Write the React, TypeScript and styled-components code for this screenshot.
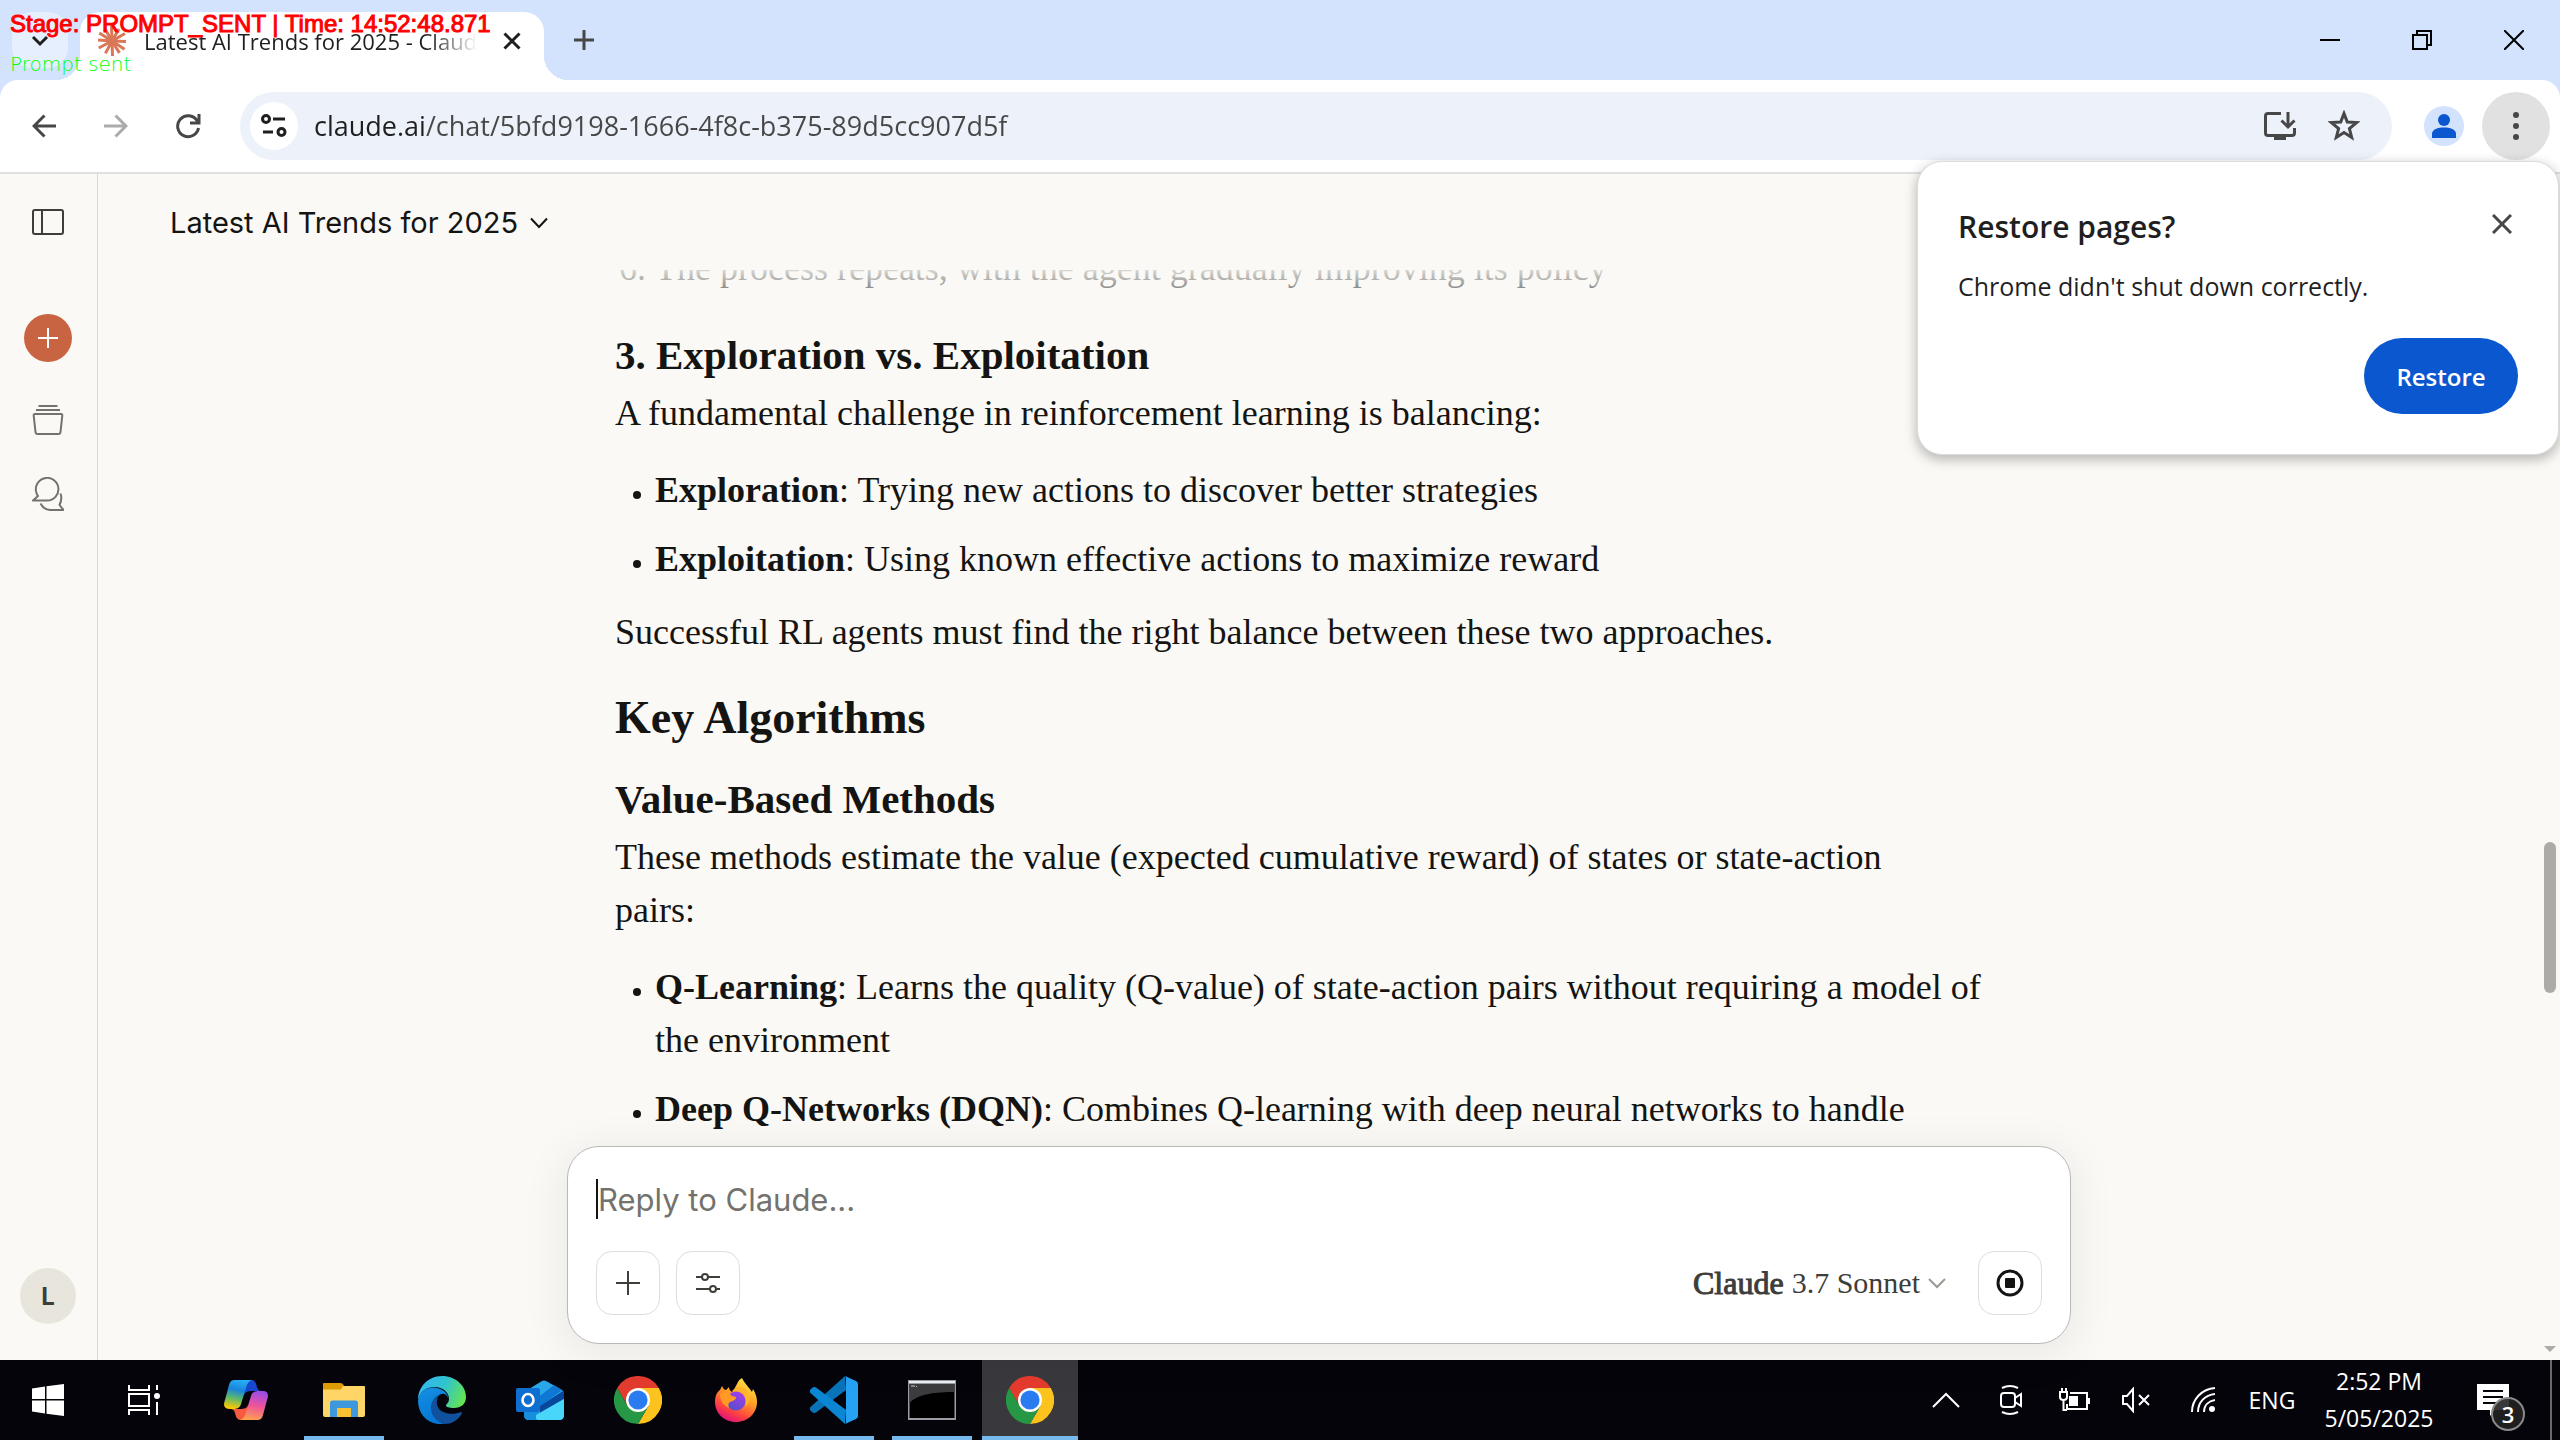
import React from 'react';
import styled, { createGlobalStyle } from 'styled-components';

const ui = `"Open Sans", "Noto Sans", sans-serif`;
const sans = `Inter, "Liberation Sans", sans-serif`;
const serif = `"Liberation Serif", serif`;

const GlobalStyle = createGlobalStyle`
  *, *::before, *::after { box-sizing: border-box; }
  html, body, #root { height: 100%; }
  body { margin: 0; overflow: hidden; background: #faf9f5; color: #141413; font-family: ${ui}; }
  button { border: 0; padding: 0; background: none; color: inherit; font: inherit; cursor: pointer; }
  svg { display: block; flex: none; }
  h1, h2, h3, p, ul, ol { margin: 0; }
`;

const Screen = styled.div`
  position: relative;
  display: grid;
  grid-template-rows: 80px 94px minmax(0, 1fr) 80px;
  height: 100vh;
`;

/* ---------- tab strip ---------- */

const TabStrip = styled.header`
  display: flex;
  align-items: stretch;
  padding-left: 12px;
  background: #d3e3fd;
`;

const TabSearch = styled.button`
  align-self: center;
  display: grid;
  place-items: center;
  width: 56px;
  height: 56px;
  margin-right: 12px;
  border-radius: 20px;
  background: #e6effd;
`;

const Tab = styled.div`
  position: relative;
  display: flex;
  align-items: center;
  gap: 16px;
  width: 464px;
  margin-top: 12px;
  padding: 0 20px 10px 16px;
  border-radius: 20px 20px 0 0;
  background: #fff;

  &::before,
  &::after {
    content: '';
    position: absolute;
    bottom: 0;
    width: 24px;
    height: 24px;
  }
  &::before {
    right: 100%;
    background: radial-gradient(circle at 0 0, transparent 24px, #fff 24px);
  }
  &::after {
    left: 100%;
    background: radial-gradient(circle at 100% 0, transparent 24px, #fff 24px);
  }
`;

const TabTitle = styled.span`
  flex: 1;
  overflow: hidden;
  white-space: nowrap;
  font-size: 22px;
  line-height: 32px;
  color: #1f1f1f;
  mask-image: linear-gradient(to right, #000 calc(100% - 56px), transparent 98%);
`;

const StripButton = styled.button`
  display: grid;
  place-items: center;
  width: 80px;
`;

const WindowControls = styled.div`
  display: flex;
  margin-left: auto;
`;

const WindowButton = styled.button`
  display: grid;
  place-items: center;
  width: 92px;
`;

/* ---------- toolbar ---------- */

const ToolbarWrap = styled.div`
  background: #d3e3fd;
`;

const Toolbar = styled.div`
  display: flex;
  align-items: center;
  height: 94px;
  padding: 0 10px 0 8px;
  border-bottom: 2px solid #e0e0e0;
  border-radius: 18px 18px 0 0;
  background: #fff;
`;

const NavButton = styled.button`
  display: grid;
  place-items: center;
  width: 72px;
  height: 68px;
`;

const Omnibox = styled.label`
  flex: 1;
  display: flex;
  align-items: center;
  height: 68px;
  margin: 0 32px 0 16px;
  padding: 0 16px 0 10px;
  border-radius: 34px;
  background: #ecf1fa;
`;

const SiteInfo = styled.button`
  display: grid;
  place-items: center;
  width: 48px;
  height: 48px;
  border-radius: 50%;
  background: #fff;
`;

const UrlInput = styled.input`
  flex: 1;
  min-width: 0;
  margin-left: 16px;
  padding: 0;
  border: 0;
  outline: 0;
  font-family: ${ui};
  font-size: 27px;
  line-height: 40px;
  color: #474747;
  background: linear-gradient(to right, #1f1f1f 110px, #474747 110px);
  background-clip: text;
  -webkit-text-fill-color: transparent;
`;

const OmniAction = styled.button`
  display: grid;
  place-items: center;
  width: 64px;
  height: 64px;
`;

const ProfileButton = styled.button`
  margin-right: 18px;
`;

const MenuButton = styled.button`
  display: grid;
  place-items: center;
  width: 68px;
  height: 68px;
  border-radius: 50%;
  background: #e1e1e1;
`;

/* ---------- restore bubble ---------- */

const Bubble = styled.section`
  position: absolute;
  top: 162px;
  right: 2px;
  width: 640px;
  padding: 40px;
  border-radius: 24px;
  background: #fff;
  box-shadow: 0 0 0 1px #dcdcdc, 0 4px 12px 2px rgba(0, 0, 0, 0.26);
`;

const BubbleHead = styled.div`
  display: flex;
  justify-content: space-between;
  align-items: flex-start;
  padding-right: 6px;
`;

const BubbleTitle = styled.h2`
  font-size: 30px;
  line-height: 50px;
  font-weight: 600;
  color: #1f1f1f;
`;

const Dismiss = styled.button`
  display: grid;
  place-items: center;
  height: 44px;
`;

const BubbleText = styled.p`
  margin-top: 14px;
  font-size: 25px;
  line-height: 40px;
  color: #1f1f1f;
`;

const RestoreButton = styled.button`
  display: block;
  width: 154px;
  height: 76px;
  margin: 32px 0 0 auto;
  border-radius: 38px;
  background: #0b57d0;
  color: #fff;
  font-size: 24px;
  font-weight: 600;
`;

/* ---------- page ---------- */

const Page = styled.div`
  display: grid;
  grid-template-columns: 98px minmax(0, 1fr) 20px;
  min-height: 0;
  background: #faf9f5;
`;

const Sidebar = styled.nav`
  display: flex;
  flex-direction: column;
  align-items: center;
  padding: 24px 1px 36px 0;
  border-right: 1px solid #d9d8d4;
`;

const SideButton = styled.button`
  display: grid;
  place-items: center;
  width: 48px;
  height: 48px;
  margin-bottom: 26px;
`;

const NewChat = styled(SideButton)`
  margin: 42px 0 34px;
  border-radius: 50%;
  background: #c96442;
`;

const Avatar = styled.button`
  width: 56px;
  height: 56px;
  margin-top: auto;
  border-radius: 50%;
  background: #e8e6dc;
  color: #3d3d3a;
  font-family: ${sans};
  font-size: 24px;
  font-weight: 700;
`;

const Main = styled.main`
  display: grid;
  grid-template-rows: 96px minmax(0, 1fr) auto;
  min-height: 0;
`;

const ChatHeader = styled.div`
  display: flex;
  align-items: center;
  padding: 2px 0 0 72px;
`;

const ChatTitle = styled.button`
  display: flex;
  align-items: center;
  gap: 12px;
  font-family: ${sans};
  font-size: 29px;
  line-height: 40px;
`;

const Scroller = styled.div`
  position: relative;
  display: flex;
  flex-direction: column;
  justify-content: flex-end;
  overflow: hidden;
  padding-bottom: 10px;

  &::before {
    content: '';
    position: absolute;
    inset: 0 0 auto;
    height: 36px;
    background: linear-gradient(rgba(250, 249, 245, 0.85), rgba(250, 249, 245, 0.4) 70%, rgba(250, 249, 245, 0));
  }
`;

const Message = styled.article`
  flex: none;
  width: 100%;
  max-width: 1504px;
  margin: 0 auto;
  padding: 0 72px 0 48px;
  font-family: ${serif};
  font-size: 36px;
  line-height: 53px;
`;

const Paragraph = styled.p`
  max-width: 1340px;
`;

const Title = styled.h2`
  margin: 31px 0 29px;
  font-size: 46px;
  line-height: 56px;
`;

const Subtitle = styled.h3`
  margin-bottom: 8px;
  font-size: 41px;
  line-height: 48px;
`;

const Steps = styled.ol`
  padding-left: 40px;
  margin-bottom: 36px;
`;

const Bullets = styled.ul`
  display: grid;
  gap: 16px;
  margin: 24px 0 20px;
  padding-left: 40px;

  &:last-child { margin-bottom: 0; }
  li::marker { font-size: 26px; }
`;

const ComposerArea = styled.div`
  position: relative;
  padding-bottom: 16px;
`;

const Composer = styled.form`
  display: flex;
  flex-direction: column;
  gap: 28px;
  max-width: 1504px;
  height: 198px;
  margin: 0 auto;
  padding: 28px;
  border: 1px solid #b9b9b7;
  border-radius: 32px;
  background: #fff;
  box-shadow: 0 8px 40px 8px rgba(0, 0, 0, 0.06);
`;

const Field = styled.label`
  display: flex;
  height: 48px;
`;

const Caret = styled.span`
  width: 2px;
  height: 40px;
  margin: 4px 0 0;
  background: #141413;
`;

const Reply = styled.textarea`
  flex: 1;
  padding: 0;
  border: 0;
  outline: 0;
  resize: none;
  overflow: hidden;
  background: transparent;
  font-family: ${sans};
  font-size: 31px;
  line-height: 50px;

  &::placeholder { color: #73726c; opacity: 1; }
`;

const Actions = styled.div`
  display: flex;
  align-items: center;
  gap: 16px;
`;

const SquareButton = styled.button`
  display: grid;
  place-items: center;
  width: 64px;
  height: 64px;
  border: 1px solid #dededc;
  border-radius: 16px;
`;

const ModelButton = styled.button`
  display: flex;
  align-items: center;
  gap: 8px;
  margin: 0 16px 0 auto;
  font-family: ${serif};
  font-size: 30px;
  line-height: 40px;
  color: #3d3d3a;
`;

const ModelFamily = styled.span`
  font-size: 32px;
  -webkit-text-stroke: 1px #3d3d3a;
`;

const ScrollRail = styled.div`
  display: flex;
  flex-direction: column;
  justify-content: space-between;
  padding: 668px 4px 8px;
`;

const Thumb = styled.div`
  width: 12px;
  height: 151px;
  border-radius: 6px;
  background: #acaba8;
`;

/* ---------- taskbar ---------- */

const Taskbar = styled.footer`
  display: flex;
  background: #05040b;
  color: #fff;
`;

const Task = styled.button<{ $state?: 'open' | 'active'; $gap?: number }>`
  display: grid;
  place-items: center;
  width: 96px;
  margin-left: ${(p) => p.$gap ?? 2}px;
  background:
    ${(p) =>
      p.$state
        ? `linear-gradient(#76b9ed, #76b9ed) bottom / ${p.$state === 'active' ? '100%' : '80px'} 4px no-repeat`
        : 'none'};
  ${(p) => p.$state === 'active' && 'background-color: #39383d;'}
`;

const Tray = styled.div`
  display: flex;
  align-items: stretch;
  margin-left: auto;
  padding-right: 8px;
`;

const TrayButton = styled.button<{ $w: number }>`
  display: grid;
  place-items: center;
  width: ${(p) => p.$w}px;
  font-size: 23px;
`;

const Clock = styled.time`
  display: flex;
  flex-direction: column;
  align-items: center;
  justify-content: center;
  width: 146px;
  font-size: 23px;
  line-height: 37px;
`;

const Notices = styled.button`
  position: relative;
  display: grid;
  place-items: center;
  width: 82px;
  margin-right: 16px;
`;

const Count = styled.span`
  position: absolute;
  left: 39px;
  top: 37px;
  width: 34px;
  height: 34px;
  border: 2px solid #8a8a8a;
  border-radius: 50%;
  background: rgba(34, 34, 34, 0.9);
  font-size: 22px;
  line-height: 30px;
  font-weight: 600;
`;

const DesktopEdge = styled.span`
  width: 2px;
  background: #6a6a6a;
`;

/* ---------- recorder overlay ---------- */

const Recorder = styled.div`
  position: absolute;
  left: 10px;
  top: 8px;
  pointer-events: none;
  white-space: nowrap;
`;

const Stage = styled.p`
  color: #f00;
  font-family: "Liberation Sans", sans-serif;
  font-size: 24px;
  line-height: 32px;
  -webkit-text-stroke: 1px #f00;
`;

const Status = styled.p`
  margin-top: 8px;
  color: #0f0;
  font-family: "DejaVu Sans", sans-serif;
  font-weight: 200;
  font-size: 20px;
  line-height: 32px;
`;

/* ---------- icons ---------- */

type IconProps = { w: number; h?: number; sw?: number; color?: string; children: React.ReactNode };
const Icon = ({ w, h = w, sw = 2, color = 'currentColor', children }: IconProps) => (
  <svg width={w} height={h} viewBox={`0 0 ${w} ${h}`} fill="none" stroke={color} strokeWidth={sw} aria-hidden="true">
    {children}
  </svg>
);

const Burst = () => (
  <Icon w={32} sw={3} color="#d97757">
    {[2, 33, 58, 88, 118, 152, 184, 212, 240, 268, 300, 330].map((a, i) => (
      <path key={a} d={`M16 16L${i % 2 ? 31 : 30} 16`} transform={`rotate(${a} 16 16)`} />
    ))}
  </Icon>
);

const ChromeLogo = () => (
  <Icon w={48} sw={0}>
    <path d="M3.2 12A24 24 0 0 1 44.8 12L24 12V24L13.6 30Z" fill="#e33b2e" />
    <path d="M44.8 12A24 24 0 0 1 24 48L34.4 30L24 24V12Z" fill="#fcc31e" />
    <path d="M24 48A24 24 0 0 1 3.2 12L13.6 30L24 24L34.4 30Z" fill="#269745" />
    <circle cx="24" cy="24" r="12" fill="#fff" />
    <circle cx="24" cy="24" r="9.6" fill="#2a7af0" />
  </Icon>
);

const Copilot = () => (
  <Icon w={44} h={40} sw={0}>
    <defs>
      <linearGradient id="cpA" x1="0.6" y1="0" x2="0.4" y2="1">
        <stop offset="0" stopColor="#27b0f5" />
        <stop offset="0.35" stopColor="#1a84dc" />
        <stop offset="0.65" stopColor="#5cb96a" />
        <stop offset="1" stopColor="#fbca05" />
      </linearGradient>
      <linearGradient id="cpB" x1="0.6" y1="0" x2="0.4" y2="1">
        <stop offset="0" stopColor="#9a4be8" />
        <stop offset="0.5" stopColor="#ee5499" />
        <stop offset="1" stopColor="#ffa14f" />
      </linearGradient>
    </defs>
    <path d="M22 0H27C31 0 32 3 33 7C34 10 35 11 38 11H27C24 11 21 12 20 15Z" fill="#1747cf" />
    <path d="M22 40H17C13 40 12 37 11 33C10 30 9 29 6 29H17C20 29 23 28 24 25Z" fill="#f8593f" />
    <path d="M11 0H29C25 0 23 4 22 8L17 24C16 28 13 29 9 29H5C0 29-1 25 1 20L5 5C6 1 8 0 11 0Z" fill="url(#cpA)" />
    <path d="M33 40H15C19 40 21 36 22 32L27 16C28 12 31 11 35 11H39C44 11 45 15 43 20L39 35C38 39 36 40 33 40Z" fill="url(#cpB)" />
  </Icon>
);

const Explorer = () => (
  <Icon w={42} h={34} sw={0}>
    <path d="M0 1Q0 0 1 0H17Q20 0 21 3V10H0Z" fill="#dd9b04" />
    <path d="M0 6.500H18L20 3H41Q42 3 42 4V32Q42 34 40 34H2Q0 34 0 32Z" fill="#fed566" />
    <path d="M14 25H28V34H14Z" fill="#f8bf33" />
    <path d="M7 20Q7 17.500 9.500 17.500H32.500Q35 17.500 35 20V34H28V25H14V34H7Z" fill="#3d98dd" />
  </Icon>
);

const Edge = () => (
  <Icon w={48} sw={0}>
    <defs>
      <linearGradient id="edA" x1="0" y1="0.3" x2="1" y2="0.6">
        <stop offset="0" stopColor="#35b8f1" />
        <stop offset="0.5" stopColor="#2fc3cf" />
        <stop offset="1" stopColor="#66e452" />
      </linearGradient>
      <linearGradient id="edB" x1="0" y1="0" x2="0.4" y2="1">
        <stop offset="0" stopColor="#1590e2" />
        <stop offset="1" stopColor="#0477d4" />
      </linearGradient>
    </defs>
    <path d="M0 24C0 11 10 0 24 0C38 0 48 10 48 21C48 28 43 32 36 32C31 32 28 31 28 29.500C28 28 31 27 31 23C31 18 27 11 16 11C8 11 2 16 0 24Z" fill="url(#edA)" />
    <path d="M0 25C1 16 8 11 16 11.500C24 12 30 17 30.500 23C29 18 25 17 22 18.500C16 21 12 28 14 35C16 42 21 46 27 48C10 50 0 38 0 25Z" fill="url(#edB)" />
    <path d="M22 18.500C17 23 18 32 24 35.500C31 39 38 38 43 36C44.500 36 44 38 43 39C39 45 33 48 27 48C20 47 14 41 13 34C12 28 16 21 22 18.500Z" fill="#10519d" />
  </Icon>
);

const Outlook = () => (
  <Icon w={48} h={40} sw={0}>
    <path d="M8 12L26 1Q28 0 30 1L46 10Q48 11 48 14V35Q48 40 43 40H13Q8 40 8 35Z" fill="#29a7e8" />
    <path d="M20 19L38 5L46 10L24 27Z" fill="#0f78d4" />
    <path d="M24 26L47 11Q48 12 48 14V19L24 33Z" fill="#08479c" />
    <path d="M48 19V35Q48 40 43 40H23Q19 40 20 35Z" fill="#48d6fb" />
    <path d="M8 32H24L20 35V40H13Q8 40 8 35Z" fill="#1690de" />
    <rect y="8" width="24" height="24" rx="2" fill="#0f6fd0" />
    <ellipse cx="12" cy="20" rx="5.500" ry="6" fill="none" stroke="#fff" strokeWidth="2.600" />
  </Icon>
);

const Firefox = () => (
  <Icon w={42} h={44} sw={0}>
    <defs>
      <linearGradient id="ffA" x1="0.8" y1="0" x2="0.3" y2="1">
        <stop offset="0" stopColor="#fff04a" />
        <stop offset="0.45" stopColor="#ff9a24" />
        <stop offset="0.75" stopColor="#ff4340" />
        <stop offset="1" stopColor="#e0107c" />
      </linearGradient>
      <linearGradient id="ffB" x1="0.8" y1="0" x2="0.2" y2="1">
        <stop offset="0" stopColor="#a93bee" />
        <stop offset="1" stopColor="#5051c8" />
      </linearGradient>
    </defs>
    <path d="M27 0C29 5 34 9 37 14L38 11C41 16 42 20 42 24C42 35 33 44 21 44C9 44 0 35 0 24C0 18 2 14 5 12L7 8C8 10 9 12 11 12L14 9C14 11 15 13 17 14C19 12 20 9 22 6C23 3 25 1 27 0Z" fill="url(#ffA)" />
    <circle cx="21" cy="23" r="9.500" fill="url(#ffB)" />
    <path d="M5 16C9 13 14 14 17 18L21 19C21 22 18 23 15 24C13 25 13 28 14 30C8 28 5 22 5 16Z" fill="#ff9a24" />
    <path d="M17 13C24 11 30 15 31 20C31 23 31 26 30 29C36 24 36 16 30 11C26 8 20 10 17 13Z" fill="#ffb52c" />
  </Icon>
);

const VsCode = () => (
  <Icon w={48} sw={0}>
    <path d="M35 0L36 14L6 36.500Q4 37.500 2 36L0.500 34.500Q-1 33 0.500 31Z" fill="#0873b8" />
    <path d="M35 48L36 34L6 11.500Q4 10.500 2 12L0.500 13.500Q-1 15 0.500 17Z" fill="#0b86d3" />
    <path d="M35 0L46 5Q48 6 48 8V40Q48 42 46 43L35 48Q36 47 36 45V3Q36 1 35 0Z" fill="#25a2f3" />
  </Icon>
);

const Terminal = () => (
  <Icon w={48} h={40} sw={0}>
    <rect x="0" y="0" width="48" height="40" fill="#9a9ea4" />
    <rect x="1" y="1" width="46" height="2" fill="#eceff1" />
    <rect x="1.500" y="4" width="45" height="34" fill="#000" />
    <path d="M1.500 4H46.500V12C28 12 9 14 1.500 23Z" fill="#3c3c3e" />
    <path d="M3 6H7M8 6.500H9" stroke="#c8c8c8" strokeWidth="1" />
  </Icon>
);

const WindowsLogo = () => (
  <Icon w={32} sw={0}>
    <path d="M0 4.500L13 2.500V15H0ZM14.500 2.300L32 0V15H14.500ZM0 16.500H13V29.500L0 27.500ZM14.500 16.500H32V32L14.500 29.700Z" fill="#fff" />
  </Icon>
);

const TaskView = () => (
  <Icon w={32} h={30}>
    <path d="M1 0V5H21V0M1 30V25H21V30M1 9H21V21H1ZM29 0V5M29 17V30" />
    <circle cx="29" cy="11" r="3" fill="#fff" stroke="none" />
  </Icon>
);

const tasks = [
  { name: 'Copilot', icon: <Copilot />, gap: 6 },
  { name: 'File Explorer', icon: <Explorer />, state: 'open' as const },
  { name: 'Microsoft Edge', icon: <Edge /> },
  { name: 'Outlook', icon: <Outlook /> },
  { name: 'Google Chrome', icon: <ChromeLogo /> },
  { name: 'Firefox', icon: <Firefox /> },
  { name: 'Visual Studio Code', icon: <VsCode />, state: 'open' as const },
  { name: 'Command Prompt', icon: <Terminal />, state: 'open' as const },
  { name: 'Google Chrome window', icon: <ChromeLogo />, state: 'active' as const },
];

/* ---------- app ---------- */

export default function App() {
  return (
    <Screen>
      <GlobalStyle />

      <TabStrip>
        <TabSearch aria-label="Search tabs">
          <Icon w={20} sw={3} color="#1f1f1f"><path d="M3 7L10 14L17 7" /></Icon>
        </TabSearch>
        <Tab>
          <Burst />
          <TabTitle>Latest AI Trends for 2025 - Claude</TabTitle>
          <button aria-label="Close tab">
            <Icon w={24} sw={3} color="#1f1f1f"><path d="M4.500 4.500L19.500 19.500M19.500 4.500L4.500 19.500" /></Icon>
          </button>
        </Tab>
        <StripButton aria-label="New tab">
          <Icon w={20} sw={3} color="#474747"><path d="M10 0V20M0 10H20" /></Icon>
        </StripButton>
        <WindowControls>
          <WindowButton aria-label="Minimize"><Icon w={20} color="#000"><path d="M0 10H20" /></Icon></WindowButton>
          <WindowButton aria-label="Restore window">
            <Icon w={20} color="#000"><path d="M1 5H15V19H1ZM5 5V1H19V15H15" /></Icon>
          </WindowButton>
          <WindowButton aria-label="Close window"><Icon w={20} color="#000"><path d="M0 0L20 20M20 0L0 20" /></Icon></WindowButton>
        </WindowControls>
      </TabStrip>

      <ToolbarWrap>
        <Toolbar>
          <NavButton aria-label="Back"><Icon w={24} sw={3} color="#474747"><path d="M24 12H2M12.500 1.500L2 12L12.500 22.500" /></Icon></NavButton>
          <NavButton aria-label="Forward"><Icon w={24} sw={3} color="#ababab"><path d="M0 12H22M11.500 1.500L22 12L11.500 22.500" /></Icon></NavButton>
          <NavButton aria-label="Reload">
            <Icon w={26} sw={3} color="#474747"><path d="M23.500 15A10.500 10.500 0 1 1 22 7.500L23.500 9.500M24 1V10H15" /></Icon>
          </NavButton>
          <Omnibox>
            <SiteInfo type="button" aria-label="View site information">
              <Icon w={26} h={24} sw={3} color="#1f1f1f">
                <circle cx="5" cy="5" r="3.500" /><path d="M12 5H24M2 18H12" /><circle cx="20.500" cy="18" r="3.500" />
              </Icon>
            </SiteInfo>
            <UrlInput aria-label="Address" defaultValue="claude.ai/chat/5bfd9198-1666-4f8c-b375-89d5cc907d5f" />
            <OmniAction type="button" aria-label="Install Claude">
              <Icon w={32} sw={3} color="#474747">
                <path d="M17 3.500H4Q1.500 3.500 1.500 6V23Q1.500 25.500 4 25.500H28Q30.500 25.500 30.500 23V18M24 2V16M17.500 10.500L24 17L30.500 10.500" />
                <path d="M10 25H22V30H10Z" fill="#474747" stroke="none" />
              </Icon>
            </OmniAction>
            <OmniAction type="button" aria-label="Bookmark this page">
              <Icon w={32} sw={3} color="#474747">
                <path d="M16 3.500L19.300 12L28.500 12.600L21.400 18.500L23.700 27.500L16 22.600L8.300 27.500L10.600 18.500L3.500 12.600L12.700 12Z" />
              </Icon>
            </OmniAction>
          </Omnibox>
          <ProfileButton aria-label="Profile">
            <Icon w={40} sw={0}>
              <circle cx="20" cy="20" r="20" fill="#d3e3fd" />
              <circle cx="20" cy="14" r="6" fill="#0b57d0" />
              <path d="M8 32V28C8 23 14 21.500 20 21.500S32 23 32 28V32Z" fill="#0b57d0" />
            </Icon>
          </ProfileButton>
          <MenuButton aria-label="Chrome menu">
            <Icon w={8} h={30} sw={0}>
              {[4, 15, 26].map((y) => <circle key={y} cx="4" cy={y} r="3" fill="#474747" />)}
            </Icon>
          </MenuButton>
        </Toolbar>
      </ToolbarWrap>

      <Page>
        <Sidebar>
          <SideButton aria-label="Toggle sidebar">
            <Icon w={32} h={26} color="#3d3d3a"><rect x="1" y="1" width="30" height="24" rx="2" /><path d="M10 1V25" /></Icon>
          </SideButton>
          <NewChat aria-label="New chat"><Icon w={20} color="#fff"><path d="M10 0V20M0 10H20" /></Icon></NewChat>
          <SideButton aria-label="Projects">
            <Icon w={32} h={30} color="#73726c">
              <path d="M6.500 1H25.500M4 5H28M3 9H29Q30.500 9 30.300 10.500L28.500 27Q28.300 29 26.500 29H5.500Q3.700 29 3.500 27L1.700 10.500Q1.500 9 3 9Z" />
            </Icon>
          </SideButton>
          <SideButton aria-label="Chats">
            <Icon w={32} h={34} color="#73726c">
              <path d="M1 23.500H15A11.300 11.300 0 1 0 4.500 16Q5 18 6 19ZM28.500 16.500Q30.500 22 27.500 28L31.500 33H18Q11.500 32.500 8.500 26.500" strokeLinejoin="round" />
            </Icon>
          </SideButton>
          <Avatar aria-label="Account">L</Avatar>
        </Sidebar>

        <Main>
          <ChatHeader>
            <ChatTitle>
              Latest AI Trends for 2025
              <Icon w={18} h={12}><path d="M1 1.500L9 10L17 1.500" /></Icon>
            </ChatTitle>
          </ChatHeader>

          <Scroller>
            <Message>
              <Steps start={6}>
                <li>The process repeats, with the agent gradually improving its policy</li>
              </Steps>
              <Subtitle>3. Exploration vs. Exploitation</Subtitle>
              <Paragraph>A fundamental challenge in reinforcement learning is balancing:</Paragraph>
              <Bullets>
                <li><strong>Exploration</strong>: Trying new actions to discover better strategies</li>
                <li><strong>Exploitation</strong>: Using known effective actions to maximize reward</li>
              </Bullets>
              <Paragraph>Successful RL agents must find the right balance between these two approaches.</Paragraph>
              <Title>Key Algorithms</Title>
              <Subtitle>Value-Based Methods</Subtitle>
              <Paragraph>These methods estimate the value (expected cumulative reward) of states or state-action pairs:</Paragraph>
              <Bullets>
                <li><strong>Q-Learning</strong>: Learns the quality (Q-value) of state-action pairs without requiring a model of the environment</li>
                <li><strong>Deep Q-Networks (DQN)</strong>: Combines Q-learning with deep neural networks to handle</li>
              </Bullets>
            </Message>
          </Scroller>

          <ComposerArea>
            <Composer onSubmit={(e) => e.preventDefault()}>
              <Field>
                <Caret />
                <Reply aria-label="Reply to Claude" placeholder="Reply to Claude..." />
              </Field>
              <Actions>
                <SquareButton type="button" aria-label="Add content">
                  <Icon w={24} color="#3d3d3a"><path d="M12 0V24M0 12H24" /></Icon>
                </SquareButton>
                <SquareButton type="button" aria-label="Tools">
                  <Icon w={24} h={20} color="#3d3d3a">
                    <path d="M0 4H6M12 4H24M0 16H14M20 16H24" /><circle cx="9" cy="4" r="3" /><circle cx="17" cy="16" r="3" />
                  </Icon>
                </SquareButton>
                <ModelButton type="button">
                  <ModelFamily>Claude</ModelFamily> 3.7 Sonnet
                  <Icon w={18} h={12} color="#9a9993"><path d="M1 2L9 10L17 2" /></Icon>
                </ModelButton>
                <SquareButton type="button" aria-label="Stop response">
                  <Icon w={28} sw={3} color="#141413">
                    <circle cx="14" cy="14" r="12" /><rect x="9" y="9" width="10" height="10" rx="1" fill="#141413" stroke="none" />
                  </Icon>
                </SquareButton>
              </Actions>
            </Composer>
          </ComposerArea>
        </Main>

        <ScrollRail>
          <Thumb />
          <Icon w={12} h={6} sw={0}><path d="M0 0H12L6 6Z" fill="#acaba8" /></Icon>
        </ScrollRail>
      </Page>

      <Taskbar>
        <Task $gap={0} aria-label="Start"><WindowsLogo /></Task>
        <Task $gap={0} aria-label="Task View"><TaskView /></Task>
        {tasks.map((t) => (
          <Task key={t.name} aria-label={t.name} $state={t.state} $gap={t.gap}>{t.icon}</Task>
        ))}
        <Tray>
          <TrayButton $w={64} aria-label="Show hidden icons"><Icon w={28} h={16}><path d="M1 15L14 2L27 15" /></Icon></TrayButton>
          <TrayButton $w={66} aria-label="Meet now">
            <Icon w={24} h={32}>
              <rect x="2" y="9" width="14" height="14" rx="3" /><path d="M16 14L22 10V22L16 18M3 4Q11 0 19 4M3 28Q11 32 19 28" />
            </Icon>
          </TrayButton>
          <TrayButton $w={60} aria-label="Battery">
            <Icon w={32} h={24}>
              <path d="M12 5H29V21H9V16M31 10V16" /><path d="M2 4H9V9Q9 12 5.500 12T2 9ZM4 0V4M8 0V4M5.500 12V22H9" />
              <path d="M11 8H20V18H11Z" fill="#fff" stroke="none" />
            </Icon>
          </TrayButton>
          <TrayButton $w={64} aria-label="Muted">
            <Icon w={28} h={26}><path d="M1 9H5L11 2V24L5 17H1ZM17 8L27 18M27 8L17 18" /></Icon>
          </TrayButton>
          <TrayButton $w={70} aria-label="Network">
            <Icon w={24} h={26}>
              <path d="M1 25C1 12 11 2 24 1M7 25C7 15 14 8 24 7M13 25C13 18 18 14 24 13" />
              <circle cx="21" cy="22" r="3" fill="#fff" stroke="none" />
            </Icon>
          </TrayButton>
          <TrayButton $w={68}>ENG</TrayButton>
          <Clock><span>2:52 PM</span><span>5/05/2025</span></Clock>
          <Notices aria-label="Notifications">
            <Icon w={32} sw={0}>
              <path d="M0 0H32V26H18L13 32V26H0Z" fill="#fff" />
              <path d="M6 7H26M6 13H26M6 19H20" stroke="#05040b" strokeWidth="2" />
            </Icon>
            <Count>3</Count>
          </Notices>
          <DesktopEdge />
        </Tray>
      </Taskbar>

      <Bubble aria-labelledby="restore-title">
        <BubbleHead>
          <BubbleTitle id="restore-title">Restore pages?</BubbleTitle>
          <Dismiss aria-label="Dismiss"><Icon w={20} sw={3} color="#474747"><path d="M1 1L19 19M19 1L1 19" /></Icon></Dismiss>
        </BubbleHead>
        <BubbleText>Chrome didn't shut down correctly.</BubbleText>
        <RestoreButton>Restore</RestoreButton>
      </Bubble>

      <Recorder>
        <Stage>Stage: PROMPT_SENT | Time: 14:52:48.871</Stage>
        <Status>Prompt sent</Status>
      </Recorder>
    </Screen>
  );
}
